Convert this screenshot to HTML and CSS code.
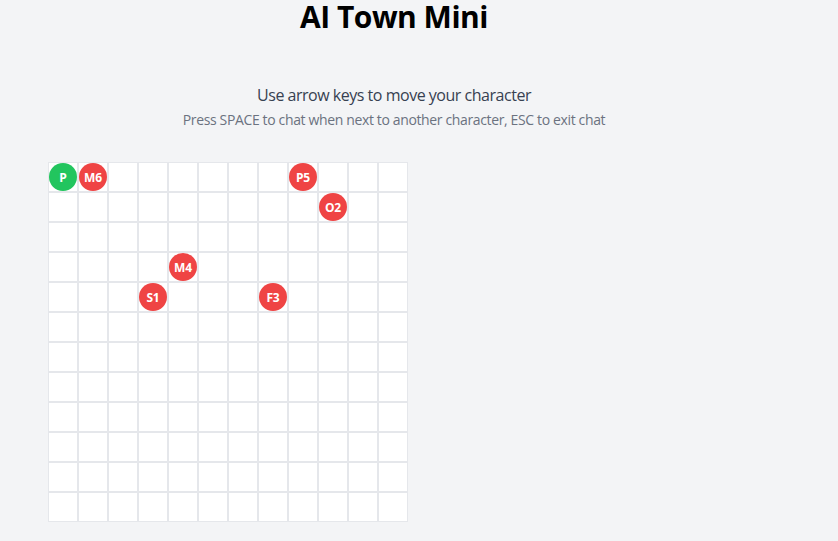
FILE: index.html
```html
<!DOCTYPE html>
<html lang="en">
<head>
<meta charset="utf-8">
<title>AI Town Mini</title>
<link rel="stylesheet" href="styles.css">
</head>
<body>
<div class="app">
  <h1 class="title">AI Town Mini</h1>
  <p class="hint">Use arrow keys to move your character</p>
  <p class="subhint">Press SPACE to chat when next to another character, ESC to exit chat</p>
  <div class="board">
    <div class="cell"><span class="token player">P</span></div><div class="cell"><span class="token npc">M6</span></div><div class="cell"></div><div class="cell"></div><div class="cell"></div><div class="cell"></div><div class="cell"></div><div class="cell"></div><div class="cell"><span class="token npc">P5</span></div><div class="cell"></div><div class="cell"></div><div class="cell"></div>
    <div class="cell"></div><div class="cell"></div><div class="cell"></div><div class="cell"></div><div class="cell"></div><div class="cell"></div><div class="cell"></div><div class="cell"></div><div class="cell"></div><div class="cell"><span class="token npc">O2</span></div><div class="cell"></div><div class="cell"></div>
    <div class="cell"></div><div class="cell"></div><div class="cell"></div><div class="cell"></div><div class="cell"></div><div class="cell"></div><div class="cell"></div><div class="cell"></div><div class="cell"></div><div class="cell"></div><div class="cell"></div><div class="cell"></div>
    <div class="cell"></div><div class="cell"></div><div class="cell"></div><div class="cell"></div><div class="cell"><span class="token npc">M4</span></div><div class="cell"></div><div class="cell"></div><div class="cell"></div><div class="cell"></div><div class="cell"></div><div class="cell"></div><div class="cell"></div>
    <div class="cell"></div><div class="cell"></div><div class="cell"></div><div class="cell"><span class="token npc">S1</span></div><div class="cell"></div><div class="cell"></div><div class="cell"></div><div class="cell"><span class="token npc">F3</span></div><div class="cell"></div><div class="cell"></div><div class="cell"></div><div class="cell"></div>
    <div class="cell"></div><div class="cell"></div><div class="cell"></div><div class="cell"></div><div class="cell"></div><div class="cell"></div><div class="cell"></div><div class="cell"></div><div class="cell"></div><div class="cell"></div><div class="cell"></div><div class="cell"></div>
    <div class="cell"></div><div class="cell"></div><div class="cell"></div><div class="cell"></div><div class="cell"></div><div class="cell"></div><div class="cell"></div><div class="cell"></div><div class="cell"></div><div class="cell"></div><div class="cell"></div><div class="cell"></div>
    <div class="cell"></div><div class="cell"></div><div class="cell"></div><div class="cell"></div><div class="cell"></div><div class="cell"></div><div class="cell"></div><div class="cell"></div><div class="cell"></div><div class="cell"></div><div class="cell"></div><div class="cell"></div>
    <div class="cell"></div><div class="cell"></div><div class="cell"></div><div class="cell"></div><div class="cell"></div><div class="cell"></div><div class="cell"></div><div class="cell"></div><div class="cell"></div><div class="cell"></div><div class="cell"></div><div class="cell"></div>
    <div class="cell"></div><div class="cell"></div><div class="cell"></div><div class="cell"></div><div class="cell"></div><div class="cell"></div><div class="cell"></div><div class="cell"></div><div class="cell"></div><div class="cell"></div><div class="cell"></div><div class="cell"></div>
    <div class="cell"></div><div class="cell"></div><div class="cell"></div><div class="cell"></div><div class="cell"></div><div class="cell"></div><div class="cell"></div><div class="cell"></div><div class="cell"></div><div class="cell"></div><div class="cell"></div><div class="cell"></div>
    <div class="cell"></div><div class="cell"></div><div class="cell"></div><div class="cell"></div><div class="cell"></div><div class="cell"></div><div class="cell"></div><div class="cell"></div><div class="cell"></div><div class="cell"></div><div class="cell"></div><div class="cell"></div>
  </div>
</div>
</body>
</html>
```
FILE: styles.css
```css
html, body {
  margin: 0;
  padding: 0;
  background: #f3f4f6;
  font-family: "Open Sans", "Noto Sans", sans-serif;
}
.app {
  width: 788px;
  display: flex;
  flex-direction: column;
}
.title {
  margin: 0;
  font-size: 30px;
  line-height: 34px;
  font-weight: 700;
  letter-spacing: -0.5px;
  color: #000;
  text-align: center;
}
.hint {
  margin: 49px 0 0;
  font-size: 16px;
  line-height: 24px;
  letter-spacing: -0.48px;
  color: #374151;
  text-align: center;
}
.subhint {
  margin: 3px 0 0;
  font-size: 14px;
  line-height: 20px;
  letter-spacing: -0.36px;
  color: #6b7280;
  text-align: center;
}
.board {
  margin: 32px 0 0 48px;
  display: grid;
  grid-template-columns: repeat(12, 30px);
  grid-auto-rows: 30px;
  width: 360px;
}
.cell {
  box-sizing: border-box;
  border: 1px solid #e5e7eb;
  background: #fff;
  display: flex;
}
.token {
  width: 28px;
  height: 28px;
  border-radius: 50%;
  display: flex;
  align-items: center;
  justify-content: center;
  color: #fff;
  font-size: 12px;
  font-weight: 700;
  letter-spacing: -0.2px;
}
.player { background: #22c55e; }
.npc { background: #ef4444; }
```
